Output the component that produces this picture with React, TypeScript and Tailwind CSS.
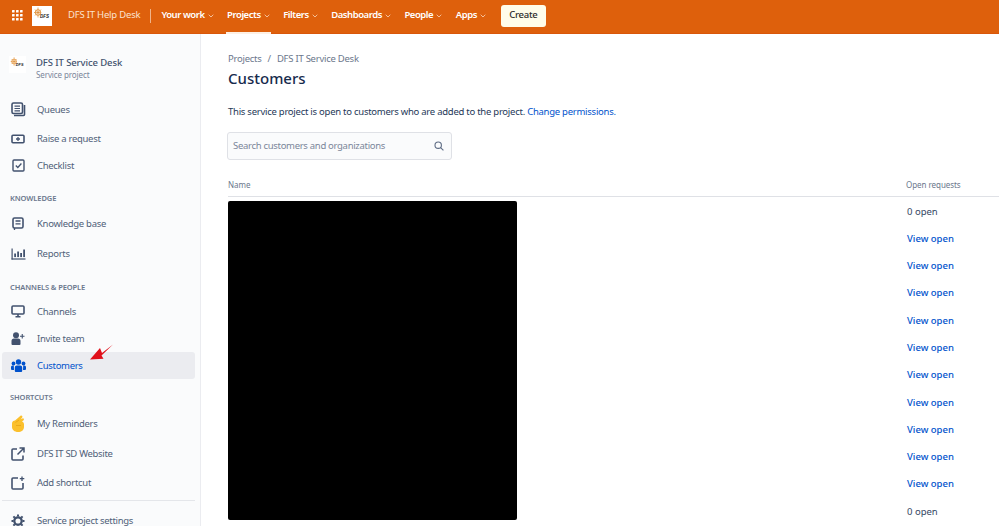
import React from "react";

function Chevron() {
  return (
    <svg width="6" height="4" viewBox="0 0 6 4" fill="none" stroke="#f6c9a8" strokeWidth="0.9" className="ml-[3px]">
      <path d="M0.7 0.7L3 3l2.300-2.300" />
    </svg>
  );
}

function Logo({ small }: { small?: boolean }) {
  return (
    <svg viewBox="0 0 20 20" className={small ? "w-[17px] h-[17px]" : "w-[20px] h-[20px]"}>
      <rect width="20" height="20" fill="#fff" />
      <circle cx="6" cy="6.500" r="2.800" fill="none" stroke="#e8a04c" strokeWidth="1" />
      <path d="M6 1.500v10M2 6.500h7M3 3.500l6 6M9 3.500l-6 6" stroke="#dd8a30" strokeWidth="0.700" />
      <text x="8" y="12" fontSize="4.500" fontWeight="800" fontStyle="italic" fill="#222" fontFamily="Liberation Sans, sans-serif">DFS</text>
    </svg>
  );
}

function Item({ label, icon, className = "", active }: { label: string; icon: React.ReactNode; className?: string; active?: boolean }) {
  return (
    <div className={`flex items-center h-[27px] ml-[2px] mr-[5px] rounded-[3px] ${active ? "bg-[#ebecf0]" : ""} ${className}`}>
      <div className="w-[35px] flex justify-center shrink-0 pl-[1px] pr-[4px]">{icon}</div>
      <span className={`pt-[2px] text-[9.500px] tracking-[-0.300px] ${active ? "text-[#0052cc]" : "text-[#505f79]"}`}>{label}</span>
    </div>
  );
}

function Heading({ children, className }: { children: React.ReactNode; className: string }) {
  return <div className={`h-[12px] leading-[12px] pl-[10px] text-[7.500px] font-semibold tracking-[-0.100px] text-[#6b778c] uppercase ${className}`}>{children}</div>;
}

const s = { fill: "none", stroke: "#42526e", strokeWidth: 1.6 };

const Icons = {
  queues: (
    <svg width="15" height="15" viewBox="0 0 15 15" {...s}>
      <rect x="1" y="1" width="10.500" height="10.500" rx="1.500" />
      <path d="M3.500 4.200h5.500M3.500 6.500h5.500M3.500 8.800h5.500" strokeWidth="1.200" />
      <path d="M13.500 3v9.500a1 1 0 0 1-1 1H3" />
    </svg>
  ),
  raise: (
    <svg width="14" height="10" viewBox="0 0 14 10" {...s}>
      <rect x="1" y="1.200" width="12" height="7.600" rx="1" />
      <path d="M7 3v4M5 5h4" strokeWidth="1.300" />
    </svg>
  ),
  check: (
    <svg width="13" height="13" viewBox="0 0 13 13" {...s}>
      <rect x="1" y="1" width="11" height="11" rx="1" strokeWidth="1.400" />
      <path d="M3.800 6.500l2 2 3.600-4" strokeWidth="1.300" />
    </svg>
  ),
  kb: (
    <svg width="12" height="14" viewBox="0 0 12 14" {...s}>
      <path d="M2.500 1h7A1.500 1.500 0 0 1 11 2.500v7A1.500 1.500 0 0 1 9.500 11H2.500A1.500 1.500 0 0 1 1 9.500v-7A1.500 1.500 0 0 1 2.500 1z" />
      <path d="M3.500 4h5M3.500 6.800h5M2.500 11v2" strokeWidth="1.300" />
    </svg>
  ),
  reports: (
    <svg width="15" height="12" viewBox="0 0 15 12" fill="#42526e">
      <rect x="0.500" y="0.500" width="1.200" height="11" />
      <rect x="0.500" y="10.400" width="14" height="1.200" />
      <rect x="3.200" y="5.500" width="1.800" height="3.600" />
      <rect x="6.200" y="3.500" width="1.800" height="5.600" />
      <rect x="9.200" y="5" width="1.800" height="4.100" />
      <rect x="12.200" y="1.500" width="1.800" height="7.600" />
    </svg>
  ),
  channels: (
    <svg width="14" height="13" viewBox="0 0 14 13" {...s}>
      <rect x="1" y="1" width="12" height="8" rx="1" />
      <path d="M4.500 11.800h5M7 9v2.500" />
    </svg>
  ),
  invite: (
    <svg width="14" height="13" viewBox="0 0 14 13" fill="#42526e">
      <circle cx="5" cy="3.200" r="3" />
      <path d="M0.500 9a2.500 2.500 0 0 1 2.500-2.500h4A2.500 2.500 0 0 1 9.500 9v3a1 1 0 0 1-1 1h-7a1 1 0 0 1-1-1z" />
      <path d="M10.700 2h1.100v1.700h1.700v1.100h-1.700v1.700h-1.100V4.800H9V3.700h1.700z" />
    </svg>
  ),
  customers: (
    <svg width="15" height="13" viewBox="0 0 15 13" fill="#0052cc">
      <circle cx="7.500" cy="3" r="2.700" />
      <circle cx="2.500" cy="4.500" r="1.900" />
      <circle cx="12.500" cy="4.500" r="1.900" />
      <path d="M3.800 8.500a2 2 0 0 1 2-2h3.400a2 2 0 0 1 2 2V12a1 1 0 0 1-1 1h-5.400a1 1 0 0 1-1-1z" />
      <path d="M0 8a1.500 1.500 0 0 1 1.500-1.500h1.300l.2 4.500H1a1 1 0 0 1-1-1zM15 8a1.500 1.500 0 0 0-1.500-1.500h-1.300l-.2 4.500H14a1 1 0 0 0 1-1z" />
    </svg>
  ),
  fingers: (
    <svg width="14" height="17" viewBox="0 0 14 17">
      <path d="M1 8.500C1 6.500 2.500 5.500 4 5.500L9.500.8c1-.8 2.500.4 1.700 1.600L9.800 4.200 11.500 3.400c1.200-.5 2 1 1.100 1.800L11 6.500c1.500.5 2 1.500 2 3v2.500C13 15 10.500 17 7 17s-6-2.200-6-5z" fill="#fbc02d" />
      <path d="M4.500 7.500L8 5M5 10.500h5" stroke="#e6a317" strokeWidth="0.800" fill="none" />
    </svg>
  ),
  external: (
    <svg width="14" height="14" viewBox="0 0 14 14" {...s}>
      <path d="M6 2H2a1 1 0 0 0-1 1v9a1 1 0 0 0 1 1h9a1 1 0 0 0 1-1V8.500" />
      <path d="M6.500 7.500L12.500 1.500M8.500 1h4.500v4.500" strokeWidth="1.500" />
    </svg>
  ),
  add: (
    <svg width="14" height="14" viewBox="0 0 14 14" {...s}>
      <path d="M7 2H2a1 1 0 0 0-1 1v9a1 1 0 0 0 1 1h9a1 1 0 0 0 1-1V7" />
      <path d="M11 0.500v4.500M8.800 2.700h4.500" strokeWidth="1.300" />
    </svg>
  ),
  gear: (
    <svg width="14" height="14" viewBox="0 0 14 14" fill="none" stroke="#42526e">
      <circle cx="7" cy="7" r="3.700" strokeWidth="2.300" />
      <path d="M7 0.500v2M7 11.500v2M0.500 7h2M11.500 7h2M2.400 2.400l1.400 1.400M10.200 10.200l1.400 1.400M2.400 11.600l1.400-1.400M10.200 3.800l1.400-1.400" strokeWidth="2" />
    </svg>
  ),
};

const navItems = ["Your work", "Projects", "Filters", "Dashboards", "People", "Apps"];

const rows = ["0 open", "View open", "View open", "View open", "View open", "View open", "View open", "View open", "View open", "View open", "View open", "0 open"];

export default function App() {
  return (
    <div className="w-[999px] h-[526px] overflow-hidden bg-white flex flex-col relative" style={{ fontFamily: '"Noto Sans", sans-serif' }}>
      <header className="h-[34px] shrink-0 bg-[#de600c] flex items-center pb-[2px] text-white text-[9.500px] border-b border-[#d9570a]">
        <svg width="11" height="11" viewBox="0 0 11 11" fill="#fff" className="ml-[12px]">
          {[0, 4, 8].flatMap((x) => [0, 4, 8].map((y) => <rect key={`${x}${y}`} x={x} y={y} width="2.600" height="2.600" rx="0.500" />))}
        </svg>
        <div className="ml-[9px]"><Logo /></div>
        <span className="ml-[16px] text-[#fbe3d0] tracking-[-0.200px]">DFS IT Help Desk</span>
        <span className="ml-[10px] w-px h-[14px] bg-[#f0b48a]" />
        {navItems.map((n, i) => (
          <div key={n} className={`flex items-center relative h-[31px] font-semibold tracking-[-0.450px] ${i === 0 ? "ml-[10px]" : "ml-[13.500px]"}`}>
            <span>{n}</span>
            <Chevron />
            {n === "Projects" && <span className="absolute left-[-1px] right-[-1px] bottom-[-3px] h-[2px] bg-[#fdf0e4]" />}
          </div>
        ))}
        <button className="ml-[15px] w-[45px] h-[22px] rounded-[3px] bg-[#fffdea] text-[#2b2b2b] text-[9.500px] tracking-[-0.300px] font-medium">Create</button>
      </header>

      <div className="flex-1 flex min-h-0">
        <aside className="w-[201px] shrink-0 bg-[#fafbfc] border-r border-[#ebecf0] relative">
          <div className="h-[62px] flex items-start pt-[22px] pl-[9px]">
            <Logo small />
            <div className="ml-[10px]">
              <div className="text-[9.500px] leading-[13px] font-medium tracking-[-0.100px] text-[#42526e]">DFS IT Service Desk</div>
              <div className="text-[8px] leading-[12px] tracking-[-0.100px] text-[#7a869a]">Service project</div>
            </div>
          </div>
          <Item label="Queues" icon={Icons.queues} />
          <Item label="Raise a request" icon={Icons.raise} className="mt-[2px]" />
          <Item label="Checklist" icon={Icons.check} />
          <Heading className="mt-[13px]">Knowledge</Heading>
          <Item label="Knowledge base" icon={Icons.kb} className="mt-[6px]" />
          <Item label="Reports" icon={Icons.reports} className="mt-[3px]" />
          <Heading className="mt-[14px]">Channels &amp; people</Heading>
          <Item label="Channels" icon={Icons.channels} className="mt-[5px]" />
          <Item label="Invite team" icon={Icons.invite} />
          <Item label="Customers" icon={Icons.customers} active />
          <Heading className="mt-[12px]">Shortcuts</Heading>
          <Item label="My Reminders" icon={Icons.fingers} className="mt-[7px]" />
          <Item label="DFS IT SD Website" icon={Icons.external} className="mt-[3px]" />
          <Item label="Add shortcut" icon={Icons.add} className="mt-[2px]" />
          <div className="h-px bg-[#e4e6ea] ml-[2px] mt-[4px] mr-[5px]" />
          <Item label="Service project settings" icon={Icons.gear} className="mt-[6px]" />
          <svg width="25" height="17" viewBox="0 0 25 17" className="absolute left-[89px] top-[310px]">
            <path d="M24 .500L13 9 11 4 1 15.500l13.500-.800-2-3.200z" fill="#e0101a" />
          </svg>
        </aside>

        <main className="flex-1 min-w-0 pl-[27px]">
          <div className="mt-[18px] h-[14px] leading-[14px] text-[9.500px] tracking-[-0.250px] text-[#6b778c] flex">
            <span>Projects</span>
            <span className="mx-[6px]">/</span>
            <span>DFS IT Service Desk</span>
          </div>
          <h1 className="mt-[1px] h-[22px] leading-[22px] text-[15px] font-medium text-[#172b4d]">Customers</h1>
          <p className="mt-[16px] h-[14px] leading-[14px] text-[9.500px] tracking-[-0.255px] text-[#253858]">
            This service project is open to customers who are added to the project. <span className="text-[#0052cc]">Change permissions.</span>
          </p>
          <div className="mt-[13px] -ml-[1px] w-[225px] h-[28px] rounded-[3px] border border-[#dfe1e6] bg-[#fafbfc] flex items-center justify-between pl-[5px] pr-[7px]">
            <span className="text-[9.500px] tracking-[-0.300px] text-[#7a869a]">Search customers and organizations</span>
            <svg width="10" height="10" viewBox="0 0 10 10" fill="none" stroke="#5e6c84" strokeWidth="1.100">
              <circle cx="4.200" cy="4.200" r="3.200" />
              <path d="M6.600 6.600l2.800 2.800" />
            </svg>
          </div>
          <div className="mt-[19px] h-[18px] flex justify-between border-b border-[#dfe1e6] text-[8px] tracking-[-0.050px] text-[#6b778c]">
            <span>Name</span>
            <span className="w-[93px]">Open requests</span>
          </div>
          <div className="flex justify-between">
            <div className="mt-[4px] w-[289px] h-[319px] bg-black rounded-[2px]" />
            <div className="w-[92px] pt-[0.500px]">
              {rows.map((r, i) => (
                <div key={i} className={`h-[27.300px] leading-[27.300px] text-[9.500px] ${r === "0 open" ? "text-[#344563]" : "text-[#0052cc] font-medium"}`}>{r}</div>
              ))}
            </div>
          </div>
        </main>
      </div>
    </div>
  );
}
